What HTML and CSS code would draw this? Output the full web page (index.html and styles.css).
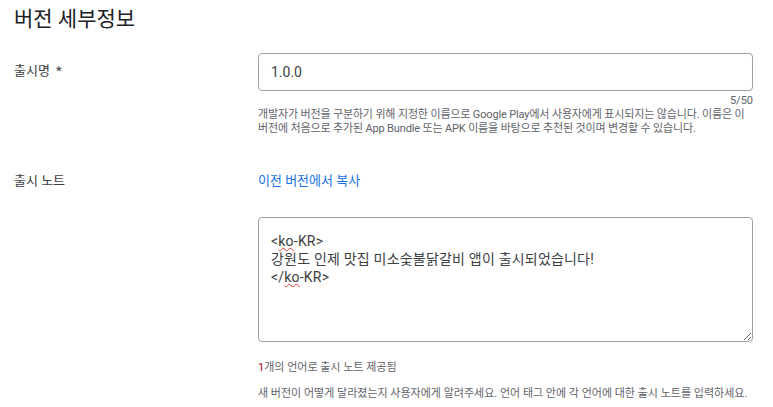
FILE: index.html
```html
<!DOCTYPE html>
<html lang="ko">
<head>
<meta charset="utf-8">
<link rel="stylesheet" href="styles.css">
</head>
<body>
<div class="page">
  <h1 class="title">버전 세부정보</h1>

  <div class="row row-name">
    <div class="label">출시명 <span class="req">*</span></div>
    <div class="field">
      <div class="input">1.0.0</div>
      <div class="counter">5/50</div>
      <p class="help">개발자가 버전을 구분하기 위해 지정한 이름으로 Google Play에서 사용자에게 표시되지는 않습니다. 이름은 이 버전에 처음으로 추가된 App Bundle 또는 APK 이름을 바탕으로 추천된 것이며 변경할 수 있습니다.</p>
    </div>
  </div>

  <div class="row row-notes">
    <div class="label">출시 노트</div>
    <div class="field">
      <a class="link">이전 버전에서 복사</a>
      <div class="textarea">&lt;<span class="spell">ko</span>-KR&gt;<br>강원도 인제 맛집 미소숯불닭갈비 앱이 출시되었습니다!<br>&lt;/<span class="spell">ko</span>-KR&gt;</div>
      <p class="count-note"><span class="num">1</span>개의 언어로 출시 노트 제공됨</p>
      <p class="help2">새 버전이 어떻게 달라졌는지 사용자에게 알려주세요. 언어 태그 안에 각 언어에 대한 출시 노트를 입력하세요.</p>
    </div>
  </div>
</div>
</body>
</html>
```

FILE: styles.css
```css
html, body {
  margin: 0;
  padding: 0;
  background: #ffffff;
}
body {
  font-family: "Roboto", "Noto Sans CJK KR", sans-serif;
  color: #202124;
}
.page {
  padding: 6px 0 0 14px;
  width: 739px;
}
.title {
  margin: 0;
  font-size: 21px;
  font-weight: 400;
  line-height: 26px;
  color: #202124;
}
.row {
  display: grid;
  grid-template-columns: 244px 495px;
}
.row-name {
  margin-top: 21px;
}
.label {
  font-size: 13px;
  line-height: 18px;
  color: #3c4043;
}
.row-name .label {
  padding-top: 9px;
}
.req {
  margin-left: 3px;
}
.field {
  display: flex;
  flex-direction: column;
}
.input {
  box-sizing: border-box;
  height: 38px;
  border: 1px solid #9aa0a6;
  border-radius: 4px;
  padding: 0 12px;
  font-size: 14px;
  line-height: 36px;
  color: #3c4043;
}
.counter {
  text-align: right;
  font-size: 11px;
  line-height: 14px;
  margin-top: 3px;
  color: #5f6368;
}
.help {
  margin: 0;
  font-size: 11px;
  line-height: 14px;
  letter-spacing: -0.15px;
  color: #5f6368;
}
.row-notes {
  margin-top: 36px;
}
.link {
  font-size: 13px;
  line-height: 18px;
  color: #1a73e8;
  text-decoration: none;
  cursor: pointer;
}
.textarea {
  box-sizing: border-box;
  margin-top: 27px;
  height: 125px;
  border: 1px solid #9aa0a6;
  border-radius: 4px;
  padding: 14px 12px 12px;
  font-size: 14px;
  line-height: 18px;
  letter-spacing: 0.2px;
  color: #3c4043;
  resize: both;
  overflow: auto;
}
.spell {
  text-decoration: underline wavy #e53935;
  text-decoration-thickness: 1px;
  text-underline-offset: 1px;
}
.count-note {
  margin: 19px 0 0;
  font-size: 11px;
  line-height: 14px;
  color: #5f6368;
}
.num {
  color: #a50e0e;
}
.help2 {
  margin: 12px 0 0;
  font-size: 11px;
  line-height: 14px;
  color: #5f6368;
}
```
